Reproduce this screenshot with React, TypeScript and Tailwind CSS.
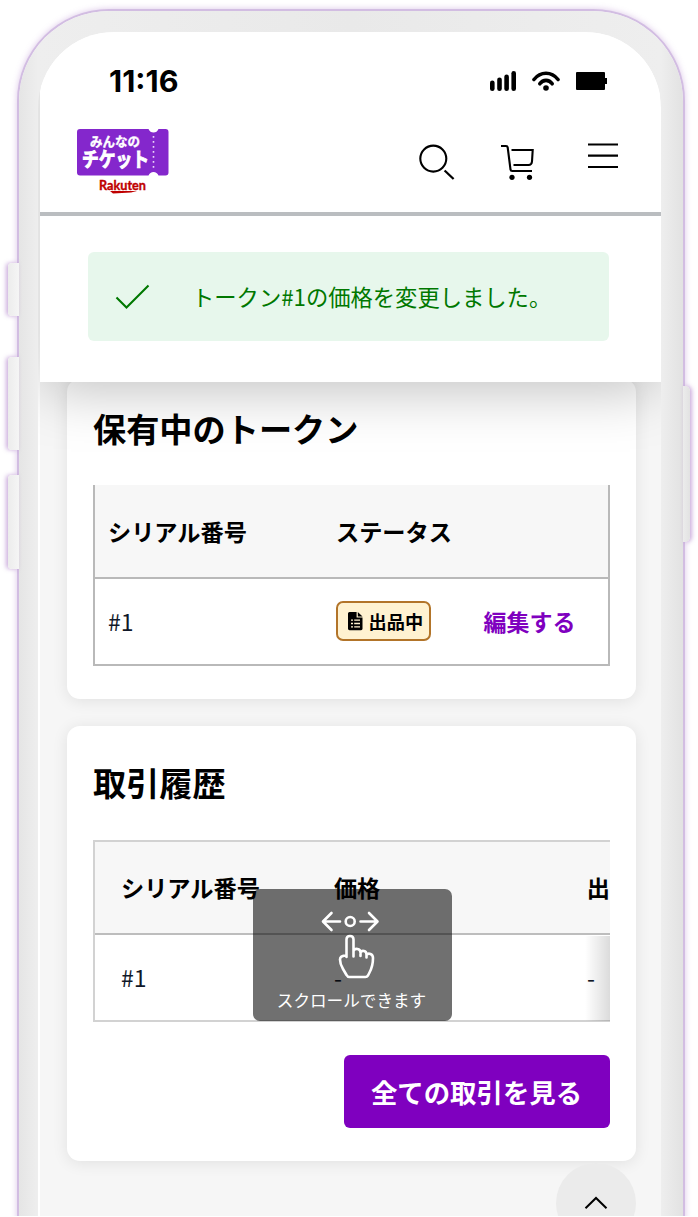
import React from "react";

const serialLabel = "シリアル番号";

function StatusBar() {
  return (
    <div className="flex h-[98px] items-center justify-between pr-[54px] pl-[69px]">
      <span className="font-['Inter'] text-[30.5px] leading-none font-bold">11:16</span>
      <div className="flex items-center gap-4">
        <svg width="26" height="20" viewBox="0 0 26 20" className="shrink-0">
          <rect x="0" y="9.5" width="4.6" height="10.5" rx="2.3" />
          <rect x="7.2" y="6.5" width="4.6" height="13.5" rx="2.3" />
          <rect x="14.3" y="3.4" width="4.6" height="16.6" rx="2.3" />
          <rect x="21.4" y="0" width="4.6" height="20" rx="2.3" />
        </svg>
        <svg width="28" height="20" viewBox="0 0 28 20" className="shrink-0" fill="none" stroke="#000" strokeWidth="3.6" strokeLinecap="round">
          <path d="M2 8.5C8.5 .2 19.5 .2 26 8.5" />
          <path d="M7.8 12.8C11 8.2 17 8.2 20.2 12.8" />
          <circle cx="14" cy="17" r="2.8" fill="#000" stroke="none" />
        </svg>
        <div className="flex items-center">
          <div className="h-[18px] w-[29px] rounded-[1px] bg-black" />
          <div className="h-[6px] w-[2px] bg-black" />
        </div>
      </div>
    </div>
  );
}

function TicketLogo() {
  return (
    <svg width="94" height="68" viewBox="0 0 94 68">
      <path
        d="M3 0H71.5Q73 3.5 76.5 3.5Q80 3.5 81.5 0H88.5Q91.5 0 91.5 3V43.500Q91.5 46.500 88.5 46.500H81.5Q80 43 76.5 43Q73 43 71.5 46.500H3Q0 46.500 0 43.500V3Q0 0 3 0Z"
        fill="#8427cc"
      />
      <path d="M76.5 7V41" stroke="#e9d6f7" strokeWidth="1.6" strokeDasharray="1.8 3.2" />
      <text x="13" y="17" textLength="50" lengthAdjust="spacingAndGlyphs" className="font-['Noto_Sans_CJK_JP',sans-serif] text-[13px] font-bold" fill="#fff" stroke="#fff" strokeWidth=".4">
        みんなの
      </text>
      <text x="5" y="38" textLength="67" lengthAdjust="spacingAndGlyphs" className="font-['Noto_Sans_CJK_JP',sans-serif] text-[20px] font-bold" fill="#fff" stroke="#fff" strokeWidth="1">
        チケット
      </text>
      <text x="22" y="60.5" textLength="47" lengthAdjust="spacingAndGlyphs" className="font-['Lato',sans-serif] text-[14px] font-bold" fill="#bf0000" stroke="#bf0000" strokeWidth=".4">
        Rakuten
      </text>
      <path d="M33 62H60L54 63.4L36 64.5Z" fill="#bf0000" />
    </svg>
  );
}

function Header() {
  return (
    <header className="flex h-[86px] items-start justify-between border-b-4 border-[#babdc0] pr-[43px] pl-[37px]">
      <div className="-mt-[1px]">
        <TicketLogo />
      </div>
      <div className="flex items-start gap-[46px] pt-[12px]">
        <svg width="36" height="38" viewBox="0 0 36 38" className="mt-[2px]" fill="none" stroke="#000" strokeWidth="2.1">
          <circle cx="14.3" cy="14.6" r="13" />
          <path d="M25.6 26.5L34.6 35" strokeWidth="2.3" />
        </svg>
        <svg width="34" height="38" viewBox="0 0 34 38" className="mt-[2px]" fill="none" stroke="#000" strokeWidth="2.1">
          <path d="M0 2H5Q6.5 2 6.7 3.5L9.5 25.5Q9.7 27 11.2 27H31" />
          <path d="M10.5 6H31.7L31 17.5Q30.7 21 27.5 21H12.5" />
          <circle cx="11" cy="33.3" r="2.6" fill="#000" stroke="none" />
          <circle cx="28.5" cy="33.3" r="2.6" fill="#000" stroke="none" />
        </svg>
        <svg width="30" height="28" viewBox="0 0 30 28" className="ml-[7px]" stroke="#000" strokeWidth="2.2">
          <path d="M0 2.5H30M0 13.7H30M0 25H30" />
        </svg>
      </div>
    </header>
  );
}

function SuccessMessage() {
  return (
    <div className="flex h-[166px] pt-[36px] pr-[52px] pl-[48px]">
      <div className="flex h-[89px] w-full items-center rounded-[6px] bg-[#e7f7ec] pl-[27px] text-[#007800]">
        <svg width="36" height="26" viewBox="0 0 36 26" fill="none" stroke="currentColor" strokeWidth="2.1">
          <path d="M1.5 13.5L11.5 23.5L33.5 1.5" />
        </svg>
        <p className="ml-[41px] text-[22.3px] leading-none whitespace-nowrap">トークン#1の価格を変更しました。</p>
      </div>
    </div>
  );
}

function HoldingsCard() {
  return (
    <section className="-mt-[3px] h-[320px] rounded-[13px] bg-white px-[26px] pt-[32px] shadow-[0_2px_16px_rgba(0,0,0,0.09)]">
      <h2 className="h-[74px] text-[33.2px] leading-[33px] font-bold">保有中のトークン</h2>
      <div className="h-[181px] border-x-2 border-b-2 border-[#b9b9b9]">
        <div className="flex h-[94px] items-center border-b-2 border-[#b9b9b9] bg-[#f7f7f7] text-[23.2px] font-bold">
          <span className="w-[241px] pl-[13px]">{serialLabel}</span>
          <span>ステータス</span>
        </div>
        <div className="flex h-[84px] items-center text-[23px]">
          <span className="w-[240.5px] pl-[13px] text-[#101828]">#1</span>
          <div className="flex h-[40px] w-[95px] items-center rounded-[7px] border-2 border-[#b27429] bg-[#fff2d1] pl-[10px]">
            <svg width="15" height="19" viewBox="0 0 15 19" className="shrink-0">
              <path d="M1.5 0H8.6V5.5H14.5V16.8Q14.5 18.2 13 18.2H1.5Q0 18.2 0 16.8V1.5Q0 0 1.5 0Z" />
              <path d="M9.8 0L14.5 4.4H9.8Z" />
              <path d="M3 8.2H5M6.2 8.2H12M3 11.5H5M6.2 11.5H12M3 14.8H5M6.2 14.8H12" stroke="#fff2d1" strokeWidth="1.3" />
            </svg>
            <span className="ml-[6px] text-[18.2px] leading-none font-bold whitespace-nowrap">出品中</span>
          </div>
          <span className="ml-[53px] font-bold text-[#7f00bf]">編集する</span>
        </div>
      </div>
    </section>
  );
}

function ScrollHint() {
  return (
    <div className="absolute top-[49px] left-[160px] flex h-[132px] w-[199px] flex-col items-center rounded-[7px] bg-black/56 text-white">
      <svg width="62" height="74" viewBox="0 0 62 74" className="mt-[19px] mr-[5px]" fill="none" stroke="#fff" strokeWidth="2.6" strokeLinecap="round" strokeLinejoin="round">
        <path d="M21 13.5H4.5M12.5 5L4 13.5L12.5 22" />
        <path d="M41.5 13.5H58M50 5L58.5 13.5L50 22" />
        <circle cx="31.2" cy="13.5" r="4.5" />
        <path d="M27.5 49V31.5Q27.5 28 31 28Q34.5 28 34.5 31.5V48.5M34.5 43Q35.5 40.5 38.5 41Q41.5 41.5 41.5 44.5V48M41.5 44.5Q42.5 42.5 45 43Q47.5 43.5 47.5 46.5V49.5M47.5 47Q49 45 51.5 46Q54 47 54 50Q54 58 50.5 64.5L49 67.5Q48 69 46.5 69H30.5Q28.5 69 27.5 67L24 61Q21 56 21 51.5Q21 47.5 27.5 47.5" />
      </svg>
      <span className="mt-[1px] mr-[2px] text-[16.6px] leading-[34px] whitespace-nowrap">スクロールできます</span>
    </div>
  );
}

function HistoryCard() {
  return (
    <section className="mt-[27px] h-[435px] rounded-[13px] bg-white px-[26px] pt-[39px] shadow-[0_2px_16px_rgba(0,0,0,0.09)]">
      <h2 className="h-[76px] text-[33.2px] leading-[33px] font-bold">取引履歴</h2>
      <div className="relative -mt-px">
        <div className="h-[182px] overflow-hidden border-y-2 border-l-2 border-[#d2d2d2]">
          <div className="flex h-[93px] items-center border-b-2 border-[#bdbdbd] bg-[#f7f7f7] text-[23.2px] font-bold">
            <span className="w-[213px] pl-[26px]">{serialLabel}</span>
            <span className="w-[253px] pl-[26px]">価格</span>
            <span className="pl-[26px] whitespace-nowrap">出</span>
          </div>
          <div className="flex h-[85px] items-center text-[23px] text-[#101828]">
            <span className="w-[213px] pl-[26px]">#1</span>
            <span className="w-[253px] pl-[26px]">-</span>
            <span className="pl-[26px]">-</span>
          </div>
        </div>
        <div className="absolute right-0 bottom-[1px] h-[85px] w-[25px] bg-gradient-to-r from-black/0 to-black/14" />
        <ScrollHint />
      </div>
      <div className="mt-[33px] flex justify-end">
        <button className="h-[73px] w-[266px] rounded-[6px] bg-[#7f00bf] pt-[2px] pr-[1px] text-[26.4px] leading-none font-bold whitespace-nowrap text-white">
          全ての取引を見る
        </button>
      </div>
    </section>
  );
}

const leftKeys = [
  "top-[263px] h-[53px]",
  "top-[357px] h-[93px]",
  "top-[475px] h-[94px]",
];

export default function App() {
  return (
    <div className="h-[1217px] w-[698px] bg-white font-['Noto_Sans_CJK_JP',sans-serif] text-black">
      <div className="relative h-[1216px] overflow-hidden pt-[11px] pl-[19px]">
        <div className="relative h-[1300px] w-[664px] rounded-t-[90px] bg-[linear-gradient(90deg,#e5e5e5,#eeeeee_19px,#e9e9e9_50%,#eeeeee_642px,#e2e2e2)] pt-[21px] pl-[19px] shadow-[0_0_0_2px_#d2bde2,0_0_6px_2px_rgba(155,95,190,0.35)]">
          <div className="h-full w-[623px] overflow-hidden rounded-t-[76px] bg-white pl-[2px]">
            <div className="relative bg-white shadow-[0_12px_54px_-4px_rgba(0,0,0,0.25)]">
              <StatusBar />
              <Header />
              <SuccessMessage />
            </div>
            <main className="h-[900px] bg-[#f6f6f6] pr-[25px] pl-[27px]">
              <HoldingsCard />
              <HistoryCard />
              <div className="mt-[2px] ml-auto flex h-[80px] w-[80px] justify-center rounded-full bg-[#ebebeb] pt-[33px]">
                <svg width="24" height="14" viewBox="0 0 24 14" fill="none" stroke="#000" strokeWidth="2">
                  <path d="M1.5 12.2L12 2L22.5 12.2" />
                </svg>
              </div>
            </main>
          </div>
        </div>

        {/* hardware keys on both sides of the frame */}
        {leftKeys.map((pos) => (
          <div
            key={pos}
            className={`absolute left-[8px] w-[11px] rounded-l-[4px] bg-gradient-to-r from-[#ececec] to-[#f5f5f5] shadow-[-2px_0_4px_rgba(155,95,190,0.5)] ${pos}`}
          />
        ))}
        <div className="absolute top-[386px] left-[683px] h-[156px] w-[7px] rounded-r-[5px] bg-gradient-to-r from-[#ececec] to-[#e2e2e2] shadow-[2px_0_4px_rgba(155,95,190,0.5)]" />
      </div>
    </div>
  );
}
